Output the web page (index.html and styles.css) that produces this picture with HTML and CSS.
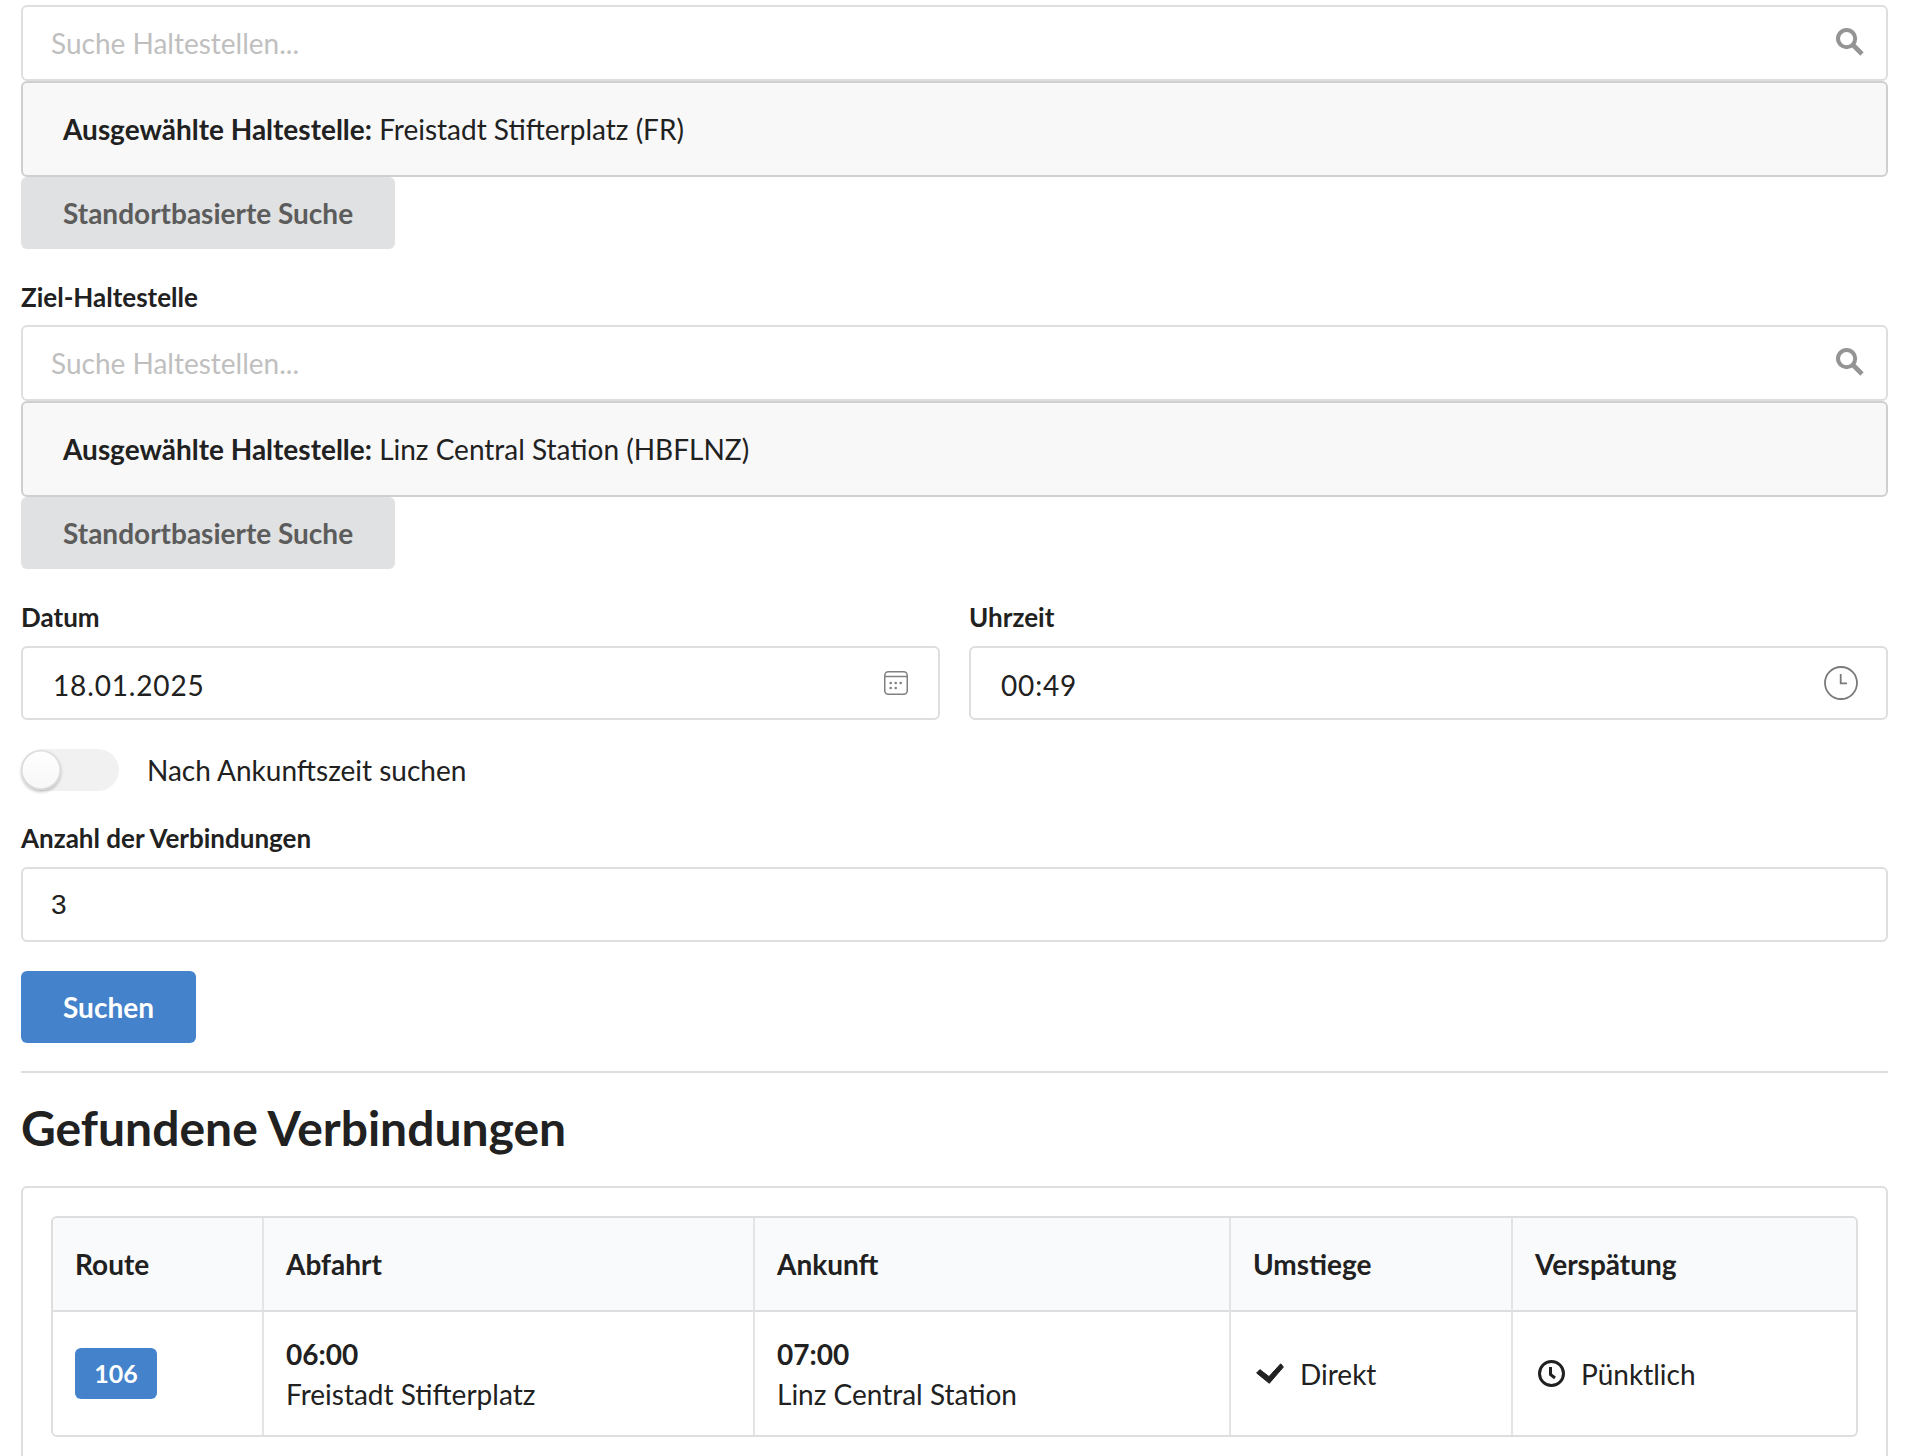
FILE: index.html
```html
<!DOCTYPE html>
<html lang="de">
<head>
    <meta charset="UTF-8">
    <meta name="viewport" content="width=device-width, initial-scale=1.0">
    <title>Verbindungssuche</title>
    <link rel="stylesheet" href="styles.css">
</head>
<body>
    <div class="page">
        <form class="search-form">
            <div class="stop-field">
                <div class="input-box">
                    <input type="text" class="text-input" placeholder="Suche Haltestellen...">
                    <svg class="search-icon" viewBox="0 0 28 28"><circle cx="10.6" cy="10.6" r="8.6" fill="none" stroke="#949494" stroke-width="4"/><path d="M16.5 16.5L26 26" stroke="#949494" stroke-width="4.6"/></svg>
                </div>
                <div class="selected-stop"><strong>Ausgewählte Haltestelle:</strong> Freistadt Stifterplatz (FR)</div>
                <button type="button" class="grey-button">Standortbasierte Suche</button>
            </div>

            <div class="stop-field">
                <label class="field-label">Ziel-Haltestelle</label>
                <div class="input-box">
                    <input type="text" class="text-input" placeholder="Suche Haltestellen...">
                    <svg class="search-icon" viewBox="0 0 28 28"><circle cx="10.6" cy="10.6" r="8.6" fill="none" stroke="#949494" stroke-width="4"/><path d="M16.5 16.5L26 26" stroke="#949494" stroke-width="4.6"/></svg>
                </div>
                <div class="selected-stop"><strong>Ausgewählte Haltestelle:</strong> Linz Central Station (HBFLNZ)</div>
                <button type="button" class="grey-button">Standortbasierte Suche</button>
            </div>

            <div class="date-row">
                <div>
                    <label class="field-label date-label">Datum</label>
                    <div class="input-box">
                        <input type="text" class="text-input date-input" value="18.01.2025">
                        <svg class="calendar-icon" viewBox="0 0 24 24" fill="none" stroke="#808080" stroke-width="1.5"><rect x="0.75" y="0.75" width="22.5" height="22.5" rx="3.5"/><path d="M0.75 5.5H23.25"/><g fill="#808080" stroke="none"><circle cx="6.7" cy="12" r="1.3"/><circle cx="11.7" cy="12" r="1.3"/><circle cx="16.7" cy="12" r="1.3"/><circle cx="6.7" cy="17" r="1.3"/><circle cx="11.7" cy="17" r="1.3"/></g></svg>
                    </div>
                </div>
                <div>
                    <label class="field-label date-label">Uhrzeit</label>
                    <div class="input-box">
                        <input type="text" class="text-input date-input" value="00:49">
                        <svg class="clock-icon" viewBox="0 0 34 34" fill="none" stroke="#7a7a7a" stroke-width="1.8"><circle cx="17" cy="17" r="16"/><path d="M16.7 8V17.3H23"/></svg>
                    </div>
                </div>
            </div>

            <div class="toggle-row">
                <span class="toggle-track"><span class="toggle-knob"></span></span>
                <span>Nach Ankunftszeit suchen</span>
            </div>

            <label class="field-label count-label">Anzahl der Verbindungen</label>
            <input type="text" class="text-input count-input" value="3">

            <button type="button" class="blue-button">Suchen</button>
        </form>

        <hr class="divider">
        <h2 class="results-title">Gefundene Verbindungen</h2>

        <div class="results-card">
            <table class="results-table">
                <thead>
                    <tr>
                        <th class="col-route">Route</th>
                        <th class="col-from">Abfahrt</th>
                        <th class="col-to">Ankunft</th>
                        <th class="col-changes">Umstiege</th>
                        <th>Verspätung</th>
                    </tr>
                </thead>
                <tbody>
                    <tr>
                        <td><span class="route-badge">106</span></td>
                        <td><strong class="time">06:00</strong>Freistadt Stifterplatz</td>
                        <td><strong class="time">07:00</strong>Linz Central Station</td>
                        <td>
                            <span class="icon-cell">
                                <svg class="check-icon" viewBox="0 0 28 21"><path d="M0.6 10L3.9 6.6L13 13.6L24.7 0.8L27.4 4L13.3 20.3Z" fill="#212121" stroke="#212121" stroke-width="1" stroke-linejoin="round"/></svg>
                                Direkt
                            </span>
                        </td>
                        <td>
                            <span class="icon-cell">
                                <svg class="small-clock" viewBox="0 0 27 27" fill="none" stroke="#212121" stroke-width="3"><circle cx="13.5" cy="13.5" r="12"/><path d="M12.5 7V14.5L17 18"/></svg>
                                Pünktlich
                            </span>
                        </td>
                    </tr>
                </tbody>
            </table>
        </div>
    </div>
</body>
</html>
```

FILE: styles.css
```css
html, body {
    height: 100%;
    margin: 0;
    overflow: hidden;
}
body {
    font-family: Lato, "Open Sans", sans-serif;
    font-size: 28px;
    line-height: 40px;
    color: #212121;
    background: #fff;
    text-rendering: optimizeLegibility;
}
.page {
    padding: 5px 30px 0 21px;
}
.input-box {
    position: relative;
}
.text-input {
    display: block;
    width: 100%;
    height: 76px;
    padding: 0 28px;
    box-sizing: border-box;
    border: 2px solid #dededf;
    border-radius: 6px;
    font-family: Lato, sans-serif;
    font-size: 28px;
    color: #212121;
    outline: none;
}
.text-input::placeholder {
    color: #bfbfbf;
}
.search-icon {
    position: absolute;
    right: 24px;
    top: 23px;
    width: 28px;
    height: 28px;
}
.selected-stop {
    height: 96px;
    padding: 0 40px;
    box-sizing: border-box;
    display: flex;
    align-items: center;
    white-space: pre;
    background: #f8f8f8;
    border: 2px solid #cfcfcf;
    border-radius: 6px;
}
.grey-button, .blue-button {
    display: block;
    height: 72px;
    padding: 0 42px;
    border: none;
    border-radius: 6px;
    font-family: Lato, sans-serif;
    font-size: 28px;
    font-weight: bold;
    text-rendering: optimizeLegibility;
}
.grey-button {
    background: #e0e1e2;
    color: #5c5c5c;
}
.blue-button {
    margin-top: 29px;
    background: #4483cb;
    color: #fff;
}
.field-label {
    display: block;
    margin-bottom: 10px;
    font-size: 26px;
    font-weight: bold;
    line-height: 35px;
}
.stop-field {
    margin-bottom: 31px;
}
.date-label {
    margin-bottom: 11px;
}
.date-row {
    display: grid;
    grid-template-columns: 1fr 1fr;
    gap: 29px;
}
.date-input {
    height: 74px;
    padding: 4px 30px 0;
    letter-spacing: 0.85px;
}
.calendar-icon {
    position: absolute;
    right: 32px;
    top: 25px;
    width: 24px;
    height: 24px;
}
.clock-icon {
    position: absolute;
    right: 30px;
    top: 20px;
    width: 34px;
    height: 34px;
}
.toggle-row {
    display: flex;
    align-items: center;
    gap: 28px;
    margin: 29px 0 30px;
}
.toggle-track {
    display: block;
    width: 98px;
    height: 42px;
    border-radius: 21px;
    background: #f1f1f1;
}
.toggle-knob {
    display: block;
    width: 40px;
    height: 40px;
    margin-top: 1px;
    border-radius: 50%;
    background: linear-gradient(#fff, #f7f7f7);
    box-shadow: 0 2px 3px rgba(34, 36, 38, 0.25), inset 0 0 0 1.5px rgba(34, 36, 38, 0.15);
}
.count-label {
    margin-bottom: 11px;
}
.count-input {
    height: 75px;
    font-family: "Liberation Sans", sans-serif;
}
.divider {
    margin: 28px 0 0;
    border: none;
    border-top: 2px solid #dededf;
}
.results-title {
    margin: 0;
    padding: 25px 0 29px;
    font-size: 48px;
    line-height: 59px;
    font-weight: bold;
}
.results-card {
    height: 400px;
    padding: 28px 28px 0;
    border: 2px solid #dededf;
    border-radius: 6px;
}
.results-table {
    width: 100%;
    table-layout: fixed;
    border-collapse: separate;
    border-spacing: 0;
    border: 2px solid #dededf;
    border-radius: 6px;
}
.results-table th, .results-table td {
    padding: 0 22px;
    text-align: left;
    border-left: 2px solid #e4e4e5;
}
.results-table th:first-child, .results-table td:first-child {
    border-left: none;
}
.results-table th {
    height: 94px;
    box-sizing: border-box;
    background: #f9fafb;
    border-bottom: 2px solid #dededf;
    font-weight: bold;
}
.results-table th:first-child {
    border-top-left-radius: 5px;
}
.results-table th:last-child {
    border-top-right-radius: 5px;
}
.results-table td {
    height: 123px;
}
.col-route {
    width: 209px;
}
.col-from {
    width: 491px;
}
.col-to {
    width: 476px;
}
.col-changes {
    width: 282px;
}
.time {
    display: block;
}
.route-badge {
    display: inline-block;
    width: 82px;
    height: 51px;
    line-height: 51px;
    text-align: center;
    vertical-align: middle;
    border-radius: 6px;
    background: #4483cb;
    color: #fff;
    font-size: 25px;
    font-weight: bold;
}
.icon-cell {
    display: flex;
    align-items: center;
    gap: 16px;
}
.check-icon {
    width: 28px;
    height: 21px;
    margin-left: 3px;
}
.small-clock {
    width: 27px;
    height: 27px;
    margin-left: 3px;
}
```
